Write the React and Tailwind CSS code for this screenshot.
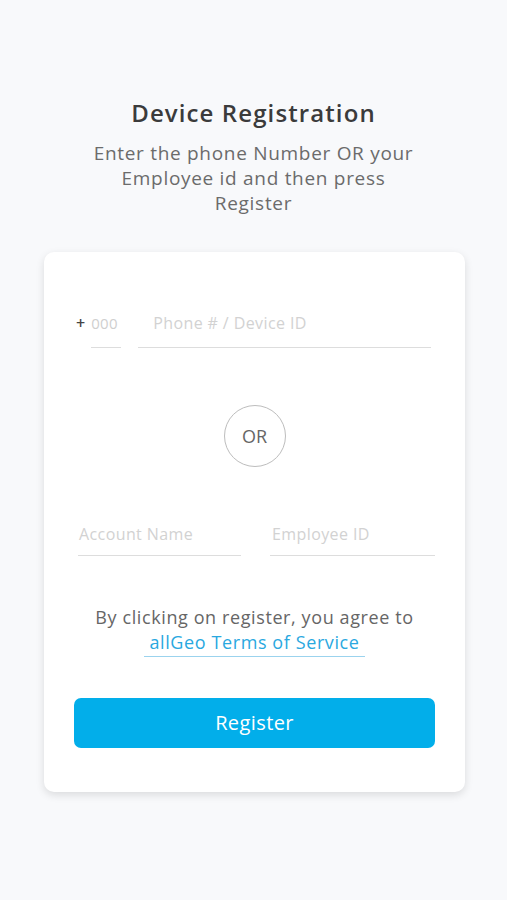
export default function App() {
  const font = { fontFamily: '"Open Sans", "Liberation Sans", sans-serif' };
  return (
    <div className="min-h-[900px] bg-[#f8f9fb] flex flex-col items-center pt-[96px]" style={font}>
      <h1 className="text-[24px] font-semibold text-[#3b3b3b] leading-[34px] tracking-[1.1px]">Device Registration</h1>
      <p className="mt-[11px] w-[330px] text-center text-[19px] leading-[25px] tracking-[0.7px] text-[#6b6b6b]">
        Enter the phone Number OR your Employee id and then press Register
      </p>

      <div className="mt-[36px] ml-[2px] w-[421px] h-[540px] bg-white rounded-[10px] shadow-[0_3px_8px_rgba(0,0,0,0.12)] px-[30px] pt-[61px]">
        {/* phone row */}
        <div className="flex items-end pl-[2px] pr-[4px]">
          <span className="text-[16px] font-semibold text-[#444] pb-[15px] mr-[6px] leading-[20px]">+</span>
          <div className="w-[30px] border-b border-[#ddd] pb-[14px] text-[15px] leading-[20px] tracking-[0.3px] text-[#cfcfcf]">000</div>
          <div className="flex-1 ml-[17px] border-b border-[#ddd] pb-[14px] pl-[15px] text-[16px] leading-[20px] tracking-[0.4px] text-[#d2d2d2]">
            Phone # / Device ID
          </div>
        </div>

        <div className="flex justify-center mt-[57px]">
          <div className="w-[62px] h-[62px] rounded-full border border-[#bdbdbd] flex items-center justify-center text-[18px] text-[#666]">
            OR
          </div>
        </div>

        <div className="flex justify-between mt-[57px] pl-[4px]">
          <div className="w-[163px] border-b border-[#ddd] pb-[11px] text-[16px] leading-[20px] tracking-[0.4px] text-[#d2d2d2] pl-[1px]">Account Name</div>
          <div className="w-[165px] border-b border-[#ddd] pb-[11px] text-[16px] leading-[20px] tracking-[0.4px] text-[#d2d2d2] pl-[2px]">Employee ID</div>
        </div>

        <div className="mt-[49px] flex flex-col items-center">
          <p className="text-[18px] leading-[24px] tracking-[0.6px] text-[#666]">By clicking on register, you agree to</p>
          <a className="mt-[1px] px-[5px] pb-[2px] border-b border-[#9bd3ee] text-[18px] leading-[24px] tracking-[0.6px] text-[#2aa8df]">
            allGeo Terms of Service
          </a>
        </div>

        <button className="mt-[41px] w-full h-[50px] rounded-[7px] bg-[#02aeea] text-white text-[20px] tracking-[0.4px]">
          Register
        </button>
      </div>
    </div>
  );
}
